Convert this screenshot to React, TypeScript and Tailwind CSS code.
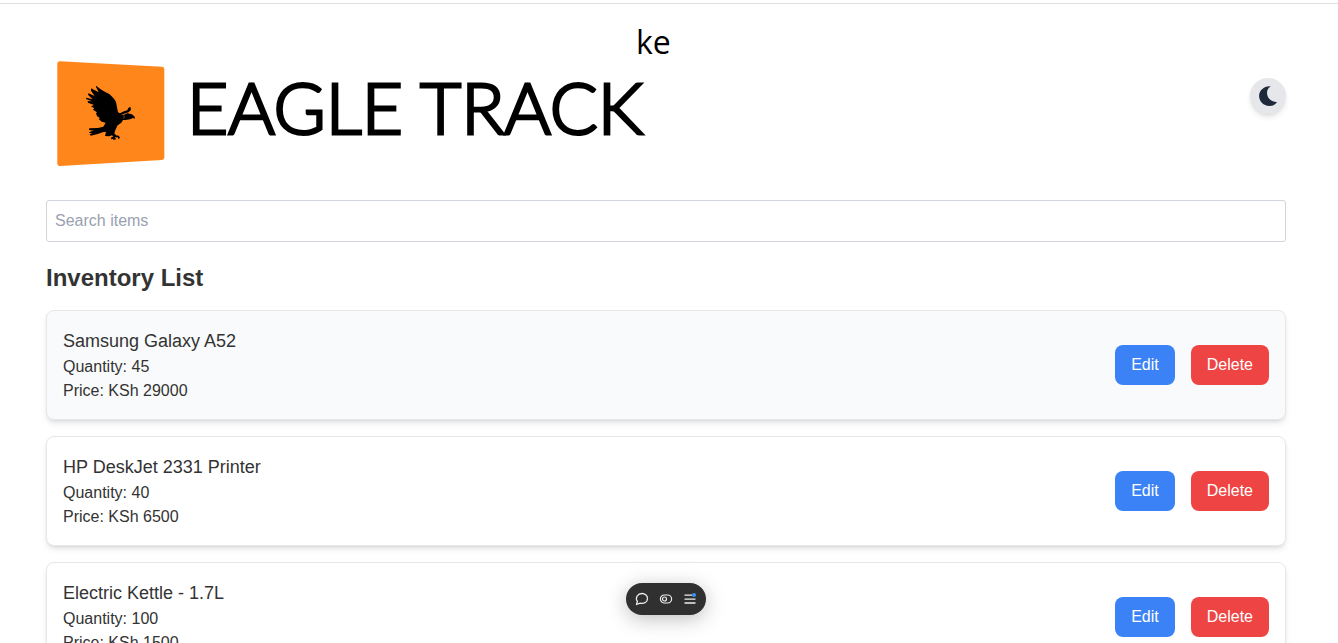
const items = [
  { name: "Samsung Galaxy A52", quantity: 45, price: 29000 },
  { name: "HP DeskJet 2331 Printer", quantity: 40, price: 6500 },
  { name: "Electric Kettle - 1.7L", quantity: 100, price: 1500 },
];

function EagleMark() {
  return (
    <svg viewBox="51 33 324 318" className="mt-[41px] h-[106px] w-[108px] shrink-0" role="img" aria-label="Eagle">
      <path
        d="M60 34 L366 50 Q373 51 373 58 V322 Q373 329 366 330 L60 348 Q52 348 52 340 V42 Q52 34 60 34Z"
        fill="#ff861b"
      />
      <path
        d="M168 107 L184 119 L197 127 L209 133 L222 146 L228 156 L234 187 L240 190 L252 184 L262 181 L265 174 L271 170 L273 179 L266 187 L252 191 L243 194 L252 194 L262 190 L276 193 L284 200 L285 206 L279 204 L270 208 L257 210 L249 210 L244 218 L233 226 L227 238 L223 250 L228 256 L236 257 L240 263 L236 268 L233 262 L224 262 L229 268 L219 270 L221 266 L213 268 L214 262 L220 260 L216 256 L208 259 L195 258 L198 245 L188 247 L173 252 L152 257 L149 253 L158 250 L147 249 L150 245 L161 242 L147 240 L148 235 L174 234 L190 230 L197 218 L185 215 L176 207 L180 205 L171 198 L168 190 L171 187 L159 179 L163 175 L153 169 L162 165 L144 158 L143 153 L156 154 L138 147 L139 143 L158 148 L144 134 L145 130 L164 138 L153 122 L153 115 L176 127 L168 111Z"
        fill="#000"
      />
      <path d="M250 196 l3 4 -2 6" stroke="#ff861b" strokeWidth="1.5" fill="none" />
    </svg>
  );
}

function Wordmark() {
  return (
    <div className="text-black">
      <p className="h-[51px] text-right font-['Open_Sans',sans-serif] text-[32px] leading-[44px]">ke</p>
      <h1 className="pr-7 font-['Lato',sans-serif] text-[71px] leading-[72px] font-light whitespace-nowrap [-webkit-text-stroke:3px_black] [stroke-linejoin:round]">
        EAGLE TRACK
      </h1>
    </div>
  );
}

function Toolbar() {
  return (
    <div className="pointer-events-none fixed inset-x-0 bottom-7 flex justify-center pr-1.5">
      <div className="pointer-events-auto flex h-8 items-center rounded-full bg-[#303030] px-1 text-[#ededed] shadow-[0_4px_20px_rgba(0,0,0,0.25)]">
        <button aria-label="Comments" className="flex size-6 items-center justify-center">
          <svg viewBox="0 0 16 16" className="size-4" fill="none" stroke="currentColor" strokeWidth="1.3" strokeLinejoin="round">
            <path d="M2.5 13.5 L3.4 10.4 C.8 6.5 3.8 2.5 8 2.5 C11.2 2.5 13.5 4.8 13.5 7.4 C13.5 11.1 10 13.1 6.2 12.2 Z" />
          </svg>
        </button>
        <button aria-label="Preview" className="flex size-6 items-center justify-center">
          <svg viewBox="0 0 16 16" className="size-4" fill="none" stroke="currentColor" strokeWidth="1.2">
            <rect x="2.4" y="4" width="11.2" height="8" rx="4" />
            <circle cx="6.5" cy="8" r="2" />
          </svg>
        </button>
        <button aria-label="Menu" className="flex size-6 items-center justify-center">
          <svg viewBox="0 0 16 16" className="size-4" fill="none" stroke="currentColor" strokeWidth="1.3">
            <path d="M2.5 4.2H10 M2.5 8.2H13.5 M2.5 12H13.5" />
            <circle cx="12" cy="4" r="2" fill="#3b93ff" stroke="none" />
          </svg>
        </button>
      </div>
    </div>
  );
}

export default function App() {
  return (
    <div className="min-h-screen bg-white pt-[3px] font-['Liberation_Sans',Arial,sans-serif] text-[#333]">
      <div className="border-t border-[#e0e0e0] pr-1.5">
        <main className="mx-auto max-w-[1280px] px-5">
          <header className="flex h-[196px] items-start justify-between pt-4">
            <div className="flex gap-[22px] pl-[11px]">
              <EagleMark />
              <Wordmark />
            </div>
            <button
              aria-label="Toggle dark mode"
              className="mt-[58px] flex size-9 items-center justify-center rounded-full bg-gray-200 text-gray-800 shadow-md"
            >
              <svg viewBox="0 0 20 20" className="size-5" fill="currentColor">
                <path d="M12.8 0.3 C9.8 2 8.4 5.2 9.3 9 C10.3 13.3 14.2 16.1 19 15.9 C17.2 18.7 14.3 20 11.2 19.9 C5.6 19.7 1.1 15.5 1.1 10 C1.1 4.3 6.3 -.4 12.8 .3Z" />
              </svg>
            </button>
          </header>
          <input
            type="text"
            aria-label="Search items"
            placeholder="Search items"
            className="block h-[42px] w-full rounded-[3px] border border-gray-300 bg-white p-2 text-base placeholder:text-gray-400"
          />
          <h2 className="mt-5 mb-4 text-2xl font-bold">Inventory List</h2>
          <ul className="space-y-4">
            {items.map((item, i) => (
              <li
                key={item.name}
                className={`flex items-center justify-between rounded-lg border border-gray-200 p-4 shadow-md ${i === 0 ? "bg-gray-50" : "bg-white"}`}
              >
                <div>
                  <h3 className="text-lg">{item.name}</h3>
                  <p>Quantity: {item.quantity}</p>
                  <p>Price: KSh {item.price}</p>
                </div>
                <div className="flex gap-4 text-white">
                  <button className="rounded-lg bg-[#3b82f6] px-4 py-2">Edit</button>
                  <button className="rounded-lg bg-[#ef4444] px-4 py-2">Delete</button>
                </div>
              </li>
            ))}
          </ul>
        </main>
      </div>
      <Toolbar />
    </div>
  );
}
